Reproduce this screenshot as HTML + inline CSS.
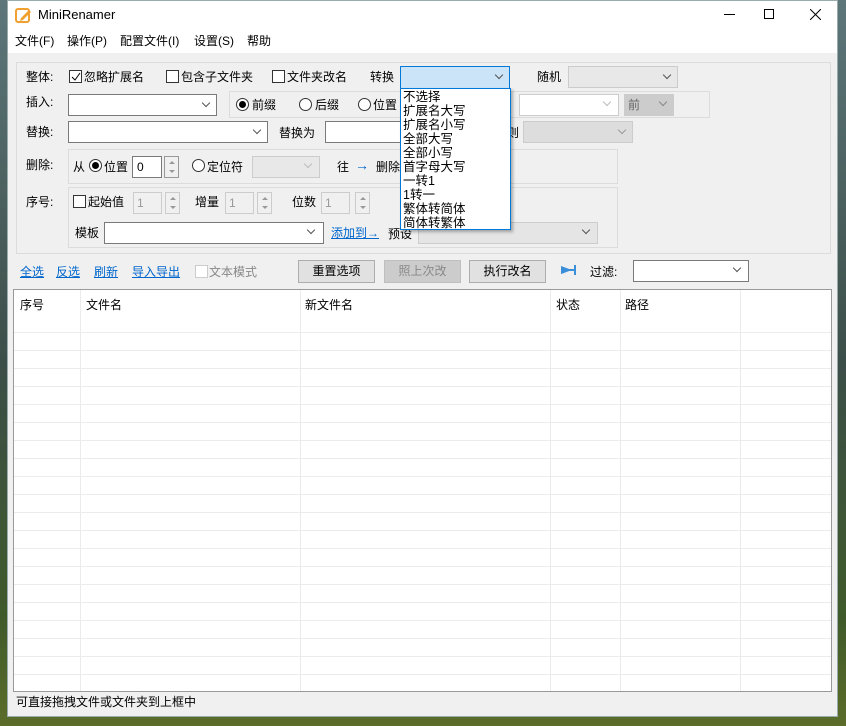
<!DOCTYPE html>
<html><head><meta charset="utf-8"><style>
*{box-sizing:border-box;margin:0;padding:0}
body{width:846px;height:726px;overflow:hidden;position:relative;font-family:"Liberation Sans","Noto Sans CJK SC",sans-serif;font-size:12px;line-height:14px;color:#000;background:linear-gradient(180deg,#5d767a 0%,#3c4e48 50%,#3f5a2a 85%,#5c6d2a 100%)}
.a{position:absolute;white-space:nowrap}
#win{position:absolute;left:7px;top:0;width:831px;height:717px;background:#f0f0f0;border:1px solid #9aa}
.inp{position:absolute;background:#fff;border:1px solid #7a7a7a;height:22px}
.dis{position:absolute;background:#e8e8e8;border:1px solid #ccc;height:22px}
.cb{position:absolute;width:13px;height:13px;border:1px solid #333;background:#fff}
.rb{position:absolute;width:13px;height:13px;border:1px solid #333;border-radius:50%;background:#fff}
.grp{position:absolute;border:1px solid #dcdcdc}
.chev{position:absolute;width:6px;height:6px;border-right:1px solid #555;border-bottom:1px solid #555;transform:rotate(45deg)}
.btn{position:absolute;height:23px;border:1px solid #adadad;background:#e1e1e1;text-align:center;line-height:21px}
.lnk{color:#0066cc;text-decoration:underline}
.spin{position:absolute;width:15px;height:22px;border:1px solid #ccc;background:#f0f0f0}
.spin:before{content:"";position:absolute;left:4px;top:4px;border:3px solid transparent;border-bottom:3px solid #999;border-top:0}
.spin:after{content:"";position:absolute;left:4px;bottom:4px;border:3px solid transparent;border-top:3px solid #999;border-bottom:0}
</style></head><body>
<div id="win">
<div class="a" style="left:0;top:0;width:829px;height:52px;background:#fff"></div>
</div>
<svg class="a" style="left:15px;top:7px" width="17" height="17"><rect x="1" y="2" width="13" height="13" rx="2" fill="none" stroke="#f0a030" stroke-width="2"/><path d="M6 11 L14 3 L16 5 L8 13 L5 14 Z" fill="#f0a030"/></svg>
<div class="a" style="left:38px;top:8px;font-size:13px">MiniRenamer</div>
<div class="a" style="left:724px;top:14px;width:11px;height:1px;background:#000"></div>
<div class="a" style="left:764px;top:9px;width:10px;height:10px;border:1px solid #000"></div>
<svg class="a" style="left:810px;top:9px" width="11" height="11"><path d="M0 0L11 11M11 0L0 11" stroke="#000"/></svg>
<div class="a" style="left:15px;top:34px">文件(F)</div>
<div class="a" style="left:67px;top:34px">操作(P)</div>
<div class="a" style="left:120px;top:34px">配置文件(I)</div>
<div class="a" style="left:194px;top:34px">设置(S)</div>
<div class="a" style="left:247px;top:34px">帮助</div>

<div class="grp" style="left:16px;top:62px;width:815px;height:192px"></div>
<div class="a" style="left:26px;top:70px">整体:</div>
<div class="cb" style="left:69px;top:70px"></div><svg class="a" style="left:71px;top:72px" width="10" height="10"><path d="M1 5L4 8L9 1" stroke="#000" fill="none"/></svg>
<div class="a" style="left:84px;top:70px">忽略扩展名</div>
<div class="cb" style="left:166px;top:70px"></div><div class="a" style="left:181px;top:70px">包含子文件夹</div>
<div class="cb" style="left:272px;top:70px"></div><div class="a" style="left:287px;top:70px">文件夹改名</div>
<div class="a" style="left:370px;top:70px">转换</div>
<div class="a" style="left:400px;top:66px;width:110px;height:23px;background:#cce4f7;border:1px solid #0078d7"></div>
<div class="chev" style="left:496px;top:72px"></div>
<div class="a" style="left:537px;top:70px">随机</div>
<div class="dis" style="left:568px;top:66px;width:110px"></div><div class="chev" style="left:664px;top:72px"></div>

<div class="a" style="left:26px;top:95px">插入:</div>
<div class="inp" style="left:68px;top:94px;width:149px"></div><div class="chev" style="left:203px;top:100px"></div>
<div class="grp" style="left:229px;top:91px;width:481px;height:27px"></div>
<div class="rb" style="left:236px;top:98px"></div><div class="a" style="left:239px;top:101px;width:7px;height:7px;border-radius:50%;background:#000"></div>
<div class="a" style="left:252px;top:98px">前缀</div>
<div class="rb" style="left:299px;top:98px"></div><div class="a" style="left:315px;top:98px">后缀</div>
<div class="rb" style="left:358px;top:98px"></div><div class="a" style="left:373px;top:98px">位置</div>
<div class="inp" style="left:519px;top:94px;width:100px;border-color:#ccc"></div><div class="chev" style="left:604px;top:99px;border-color:#bbb"></div>
<div class="dis" style="left:624px;top:94px;width:50px;background:#ccc"></div><div class="a" style="left:628px;top:98px;color:#666">前</div><div class="chev" style="left:660px;top:99px;border-color:#888"></div>

<div class="a" style="left:26px;top:125px">替换:</div>
<div class="inp" style="left:68px;top:121px;width:200px"></div><div class="chev" style="left:254px;top:127px"></div>
<div class="a" style="left:279px;top:126px">替换为</div>
<div class="inp" style="left:325px;top:121px;width:80px"></div>
<div class="a" style="left:507px;top:126px">则</div>
<div class="dis" style="left:523px;top:121px;width:110px;background:#ddd"></div><div class="chev" style="left:619px;top:127px;border-color:#999"></div>

<div class="a" style="left:26px;top:158px">删除:</div>
<div class="grp" style="left:68px;top:149px;width:550px;height:35px"></div>
<div class="a" style="left:73px;top:160px">从</div>
<div class="rb" style="left:89px;top:159px"></div><div class="a" style="left:92px;top:162px;width:7px;height:7px;border-radius:50%;background:#000"></div>
<div class="a" style="left:104px;top:160px">位置</div>
<div class="inp" style="left:132px;top:156px;width:30px"></div><div class="a" style="left:137px;top:160px">0</div>
<div class="spin" style="left:164px;top:156px;border-color:#999"></div>
<div class="rb" style="left:192px;top:159px"></div><div class="a" style="left:207px;top:160px">定位符</div>
<div class="dis" style="left:252px;top:156px;width:68px"></div><div class="chev" style="left:305px;top:161px;border-color:#bbb"></div>
<div class="a" style="left:337px;top:160px">往</div><div class="a" style="left:355px;top:158px;color:#0066cc;font-size:14px">→</div>
<div class="a" style="left:376px;top:160px">删除</div>

<div class="a" style="left:26px;top:195px">序号:</div>
<div class="grp" style="left:68px;top:187px;width:550px;height:61px"></div>
<div class="cb" style="left:73px;top:195px"></div><div class="a" style="left:88px;top:195px">起始值</div>
<div class="dis" style="left:133px;top:192px;width:29px;background:#f0f0f0"></div><div class="a" style="left:137px;top:196px;color:#999">1</div>
<div class="spin" style="left:165px;top:192px"></div>
<div class="a" style="left:195px;top:195px">增量</div>
<div class="dis" style="left:225px;top:192px;width:29px;background:#f0f0f0"></div><div class="a" style="left:229px;top:196px;color:#999">1</div>
<div class="spin" style="left:257px;top:192px"></div>
<div class="a" style="left:292px;top:195px">位数</div>
<div class="dis" style="left:321px;top:192px;width:29px;background:#f0f0f0"></div><div class="a" style="left:325px;top:196px;color:#999">1</div>
<div class="spin" style="left:355px;top:192px"></div>
<div class="a" style="left:75px;top:226px">模板</div>
<div class="inp" style="left:104px;top:222px;width:220px"></div><div class="chev" style="left:308px;top:227px"></div>
<div class="a lnk" style="left:331px;top:226px">添加到→</div>
<div class="a" style="left:388px;top:227px">预设</div>
<div class="dis" style="left:418px;top:222px;width:180px;background:#e5e5e5"></div><div class="chev" style="left:583px;top:227px"></div>

<div class="a" style="left:400px;top:88px;width:111px;height:142px;background:#fff;border:1px solid #0078d7;box-shadow:2px 2px 3px rgba(0,0,0,.3);line-height:14px;font-size:12.5px;padding:1px 2px">不选择<br>扩展名大写<br>扩展名小写<br>全部大写<br>全部小写<br>首字母大写<br>一转1<br>1转一<br>繁体转简体<br>简体转繁体</div>

<div class="a lnk" style="left:20px;top:265px">全选</div>
<div class="a lnk" style="left:56px;top:265px">反选</div>
<div class="a lnk" style="left:94px;top:265px">刷新</div>
<div class="a lnk" style="left:132px;top:265px">导入导出</div>
<div class="cb" style="left:195px;top:265px;border-color:#ccc"></div><div class="a" style="left:209px;top:265px;color:#888">文本模式</div>
<div class="btn" style="left:298px;top:260px;width:77px">重置选项</div>
<div class="btn" style="left:384px;top:260px;width:77px;background:#ccc;border-color:#bfbfbf;color:#888">照上次改</div>
<div class="btn" style="left:469px;top:260px;width:77px">执行改名</div>
<svg class="a" style="left:561px;top:265px" width="16" height="10"><path d="M0 2L8 5L0 8Z M8 5H14 M14 0V10" fill="#3a8fd8" stroke="#3a8fd8" stroke-width="2"/></svg>
<div class="a" style="left:590px;top:265px">过滤:</div>
<div class="inp" style="left:633px;top:260px;width:116px"></div><div class="chev" style="left:734px;top:265px"></div>

<div class="a" style="left:13px;top:289px;width:819px;height:403px;background:#fff;border:1px solid #999"></div>
<svg class="a" style="left:14px;top:290px" width="817" height="401">
<g stroke="#ebebeb" stroke-width="1">
<line x1="66.5" y1="0" x2="66.5" y2="401"/><line x1="286.5" y1="0" x2="286.5" y2="401"/><line x1="536.5" y1="0" x2="536.5" y2="401"/><line x1="606.5" y1="0" x2="606.5" y2="401"/><line x1="726.5" y1="0" x2="726.5" y2="401"/>
</g>
<g stroke="#ececec">
<line x1="0" y1="42.5" x2="817" y2="42.5"/><line x1="0" y1="60.5" x2="817" y2="60.5"/><line x1="0" y1="78.5" x2="817" y2="78.5"/><line x1="0" y1="96.5" x2="817" y2="96.5"/><line x1="0" y1="114.5" x2="817" y2="114.5"/><line x1="0" y1="132.5" x2="817" y2="132.5"/><line x1="0" y1="150.5" x2="817" y2="150.5"/><line x1="0" y1="168.5" x2="817" y2="168.5"/><line x1="0" y1="186.5" x2="817" y2="186.5"/><line x1="0" y1="204.5" x2="817" y2="204.5"/><line x1="0" y1="222.5" x2="817" y2="222.5"/><line x1="0" y1="240.5" x2="817" y2="240.5"/><line x1="0" y1="258.5" x2="817" y2="258.5"/><line x1="0" y1="276.5" x2="817" y2="276.5"/><line x1="0" y1="294.5" x2="817" y2="294.5"/><line x1="0" y1="312.5" x2="817" y2="312.5"/><line x1="0" y1="330.5" x2="817" y2="330.5"/><line x1="0" y1="348.5" x2="817" y2="348.5"/><line x1="0" y1="366.5" x2="817" y2="366.5"/><line x1="0" y1="384.5" x2="817" y2="384.5"/>
</g></svg>
<div class="a" style="left:20px;top:298px">序号</div>
<div class="a" style="left:86px;top:298px">文件名</div>
<div class="a" style="left:305px;top:298px">新文件名</div>
<div class="a" style="left:556px;top:298px">状态</div>
<div class="a" style="left:625px;top:298px">路径</div>
<div class="a" style="left:16px;top:695px">可直接拖拽文件或文件夹到上框中</div>
</body></html>
